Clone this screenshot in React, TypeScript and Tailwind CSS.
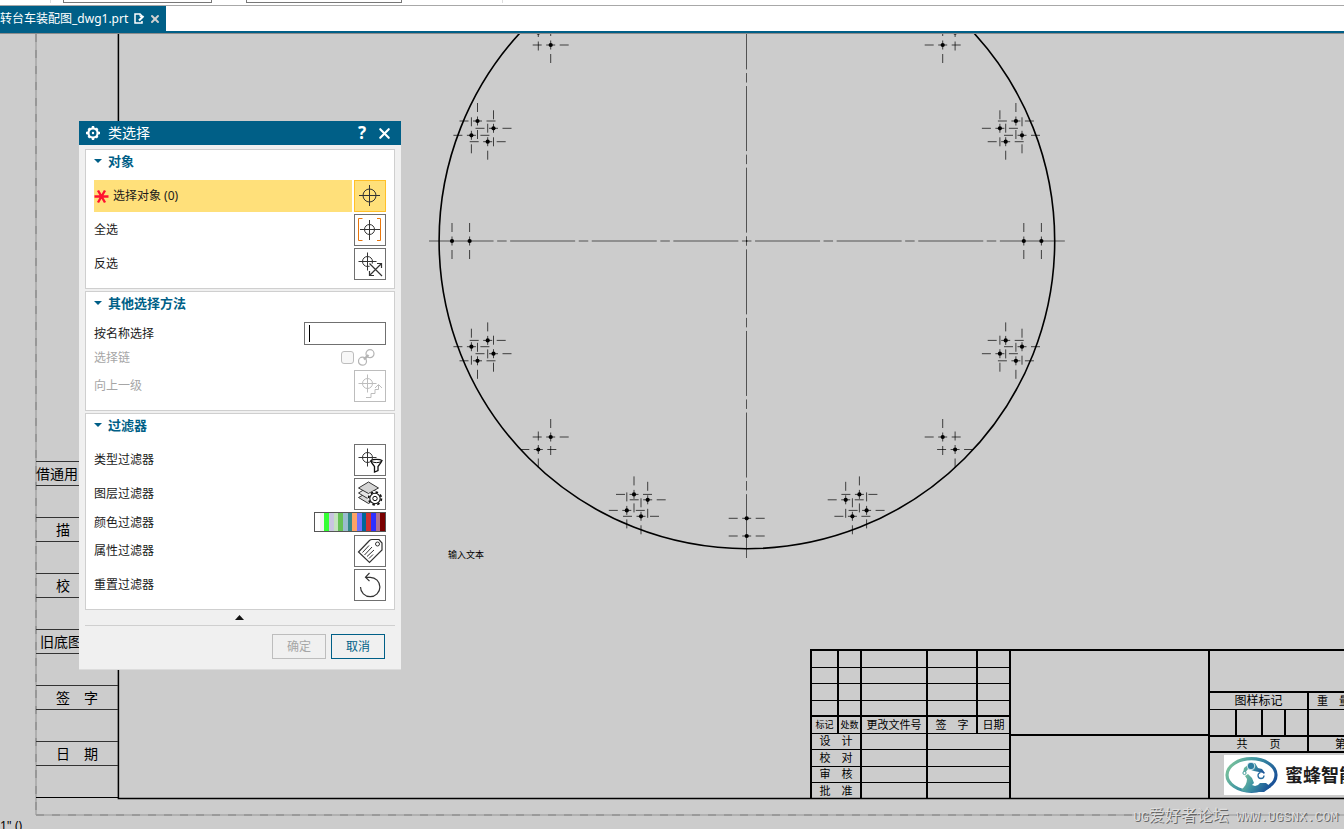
import type { ReactNode } from 'react'
import { X } from 'lucide-react'

const AXIS_X = 746.7
const AXIS_Y = 241

// left half of the hole pattern, mirrored to the right when drawn
const HOLES: [number, number][] = [
  [538.3, 32.5],
  [550.7, 45],
  [477.5, 121],
  [493.5, 128.3],
  [471.4, 135.3],
  [487.7, 141.7],
  [452, 241],
  [469.6, 241],
  [487.7, 340.4],
  [471.4, 346.7],
  [493.5, 353.7],
  [477.5, 360.8],
  [550.7, 437],
  [538.3, 449.5],
  [634, 494.4],
  [647.7, 499.8],
  [626.8, 510.4],
  [641, 516.3],
]

const COLORS = [
  '#ffffff',
  '#f2f2f2',
  '#33ff33',
  '#c9c4e1',
  '#c3e3bf',
  '#66c055',
  '#9abccf',
  '#338888',
  '#ffa366',
  '#7070ff',
  '#006699',
  '#d03030',
  '#2f2fff',
  '#b07090',
  '#7a0000',
]

function Hole({ x, y }: { x: number; y: number }) {
  // holes on an axis share its centre line
  const across = y === AXIS_Y ? '' : `M${x - 18} ${y}h9m4.5 0h9m4.5 0h9`
  const down = x === AXIS_X ? '' : `M${x} ${y - 18}v9m0 4.5v9m0 4.5v9`
  return (
    <g>
      <path d={across + down} stroke="#000" strokeWidth="0.7" />
      <circle cx={x} cy={y} r="2.1" fill="#000" />
    </g>
  )
}

function Drawing() {
  return (
    <svg className="absolute inset-0 size-full" fill="none" aria-hidden="true">
      <g transform="translate(0 -34)">
        {/* sheet edge and frame */}
        <path d="M36 34V815" stroke="#a8a8a8" strokeWidth="1.6" />
        <path d="M36 34V815" stroke="#929292" strokeWidth="1.6" strokeDasharray="8 8" />
        <path d="M36 815H3000" stroke="#a8a8a8" strokeWidth="1.6" />
        <path d="M36 815H3000" stroke="#929292" strokeWidth="1.6" strokeDasharray="8 8" />
        <path d="M118.4 34V798.4H3000" stroke="#000" strokeWidth="1.5" />

        <circle cx="746.9" cy="240.9" r="307.8" stroke="#000" strokeWidth="1.6" />

        {/* centre lines */}
        <g stroke="#000" strokeWidth="0.6" strokeDasharray="9.5 3.6 65 3.5" strokeDashoffset="4.75">
          <path d="M746.7 241H1065" />
          <path d="M746.7 241H429" />
          <path d="M746.5 241V-77" />
          <path d="M746.5 241V558" />
        </g>

        {HOLES.map(([x, y]) => (
          <g key={`${x}-${y}`}>
            <Hole x={x} y={y} />
            <Hole x={AXIS_X * 2 - x} y={y} />
          </g>
        ))}
        {/* side holes keep their cross-ticks, bottom ones sit on the vertical axis */}
        <Hole x={AXIS_X} y={518.3} />
        <Hole x={AXIS_X} y={536} />
        <circle cx={AXIS_X} cy={AXIS_Y} r="0.8" fill="#000" />
      </g>
    </svg>
  )
}

const MARGIN_LABELS = [
  { text: '借通用', pad: 'pl-0' },
  { text: '描', pad: 'pl-5' },
  { text: '校', pad: 'pl-5' },
  { text: '旧底图', pad: 'pl-1' },
  { text: '签　字', pad: 'pl-5' },
  { text: '日　期', pad: 'pl-5' },
]

function MarginStrip() {
  return (
    <div className="absolute left-9 top-[427px] w-[82px] border-b border-black text-[14px]">
      {MARGIN_LABELS.map(({ text, pad }) => (
        <div key={text} className="h-14">
          <div className={`flex h-[25px] items-center whitespace-pre border-y border-[#333] ${pad}`}>{text}</div>
        </div>
      ))}
    </div>
  )
}

const ROLES = ['设　计', '校　对', '审　核', '批　准']

function TitleBlock() {
  return (
    <div className="absolute left-[810px] right-0 top-[615px] flex h-[150px] items-start overflow-hidden text-[11px] leading-[10px]">
      <table className="w-[200px] shrink-0 table-fixed border-collapse border-x-2 border-t-2 border-black text-center [&_td]:border-x-2 [&_td]:border-y [&_td]:border-black [&_td]:p-0 [&_th]:border-x-2 [&_th]:border-t-2 [&_th]:border-b [&_th]:border-black [&_th]:p-0 [&_th]:font-normal">
        <colgroup>
          <col className="w-[27px]" />
          <col className="w-[23px]" />
          <col className="w-[66px]" />
          <col className="w-[50px]" />
          <col className="w-[33px]" />
        </colgroup>
        <tbody>
          {[0, 1, 2, 3].map((row) => (
            <tr key={row} className="h-[17px] even:h-4">
              <td />
              <td />
              <td />
              <td />
              <td />
            </tr>
          ))}
          <tr className="h-[17px]">
            <th className="text-[9px]">标记</th>
            <th className="text-[9px]">处数</th>
            <th>更改文件号</th>
            <th>签　字</th>
            <th>日期</th>
          </tr>
          {ROLES.map((role) => (
            <tr key={role} className="h-[17px] even:h-4">
              <td colSpan={2}>{role}</td>
              <td />
              <td colSpan={2} />
            </tr>
          ))}
        </tbody>
      </table>

      <div className="w-[197px] shrink-0 border-t-2 border-black">
        <div className="h-[85px] border-b-2 border-black" />
      </div>

      <div className="flex h-[150px] min-w-0 flex-1 flex-col border-l-2 border-t-2 border-black">
        <div className="h-[42px] shrink-0 border-b-2 border-black" />
        <div className="flex h-[60px] shrink-0 border-b-2 border-black">
          <div className="w-[99px] shrink-0 border-r-2 border-black text-center text-[12px]">
            <div className="h-[17px] border-b border-black leading-4">图样标记</div>
            <div className="flex h-[27px] border-b-2 border-black">
              <div className="w-[27px] border-r-2 border-black" />
              <div className="w-[26px] border-r-2 border-black" />
              <div className="w-[23px] border-r-2 border-black" />
            </div>
            <div className="whitespace-pre text-[11px] leading-[14px]">共　　页</div>
          </div>
          <div className="min-w-0 flex-1 whitespace-pre text-[11px]">
            <div className="h-[17px] border-b border-black pl-2 leading-4">重　量</div>
            <div className="h-[27px] border-b-2 border-black" />
            <div className="pl-[26px] leading-[14px]">第</div>
          </div>
        </div>
        <div className="ml-[14px] mt-0.5 flex h-10 shrink-0 items-center gap-[7px] whitespace-nowrap bg-white">
          <svg className="ml-px h-[38px] w-[53px] shrink-0" viewBox="0 0 53 38">
            <defs>
              <linearGradient id="logo" x1="0" x2="1" y1="0.2" y2="0.6">
                <stop offset="0" stopColor="#7cc49a" />
                <stop offset="0.45" stopColor="#3f95a3" />
                <stop offset="1" stopColor="#1a5298" />
              </linearGradient>
            </defs>
            <ellipse cx="26.5" cy="19" rx="24.5" ry="16.3" fill="none" stroke="url(#logo)" strokeWidth="3.2" />
            <path d="M16 34c4-3 6-7 6-11l-2-3 3-2 4 4 2 5-2 2 3 1 3-1 2-2h6l5 4-7 5H20z" fill="url(#logo)" />
            <path d="M18 17l1-5 5-4 6-1 3 5 4 1 3 4-3 2-3-3-5-1-6-2-3 4z" fill="url(#logo)" />
            <circle cx="26" cy="10" r="3.8" fill="#2d7d9f" stroke="#fff" strokeWidth="0.8" />
            <circle cx="19.500" cy="17" r="1.600" fill="#fff" stroke="#4da39e" />
            <circle cx="36" cy="19.500" r="3" fill="#fff" stroke="#2b6da0" strokeWidth="1.300" strokeDasharray="13 6" />
          </svg>
          <span className="text-[18px] font-bold text-[#1c1c1c]">蜜蜂智能</span>
        </div>
      </div>
    </div>
  )
}

const TARGET = 'M12.500 3.500v18M3.500 12.500h18M7.500 12.500a5 5 0 1 0 10 0a5 5 0 1 0-10 0'

function Icon({ children }: { children: ReactNode }) {
  return (
    <svg className="size-[30px]" viewBox="0 0 30 30" fill="none" stroke="currentColor" strokeWidth="1">
      {children}
    </svg>
  )
}

function Gear({ className }: { className?: string }) {
  return (
    <svg className={className} viewBox="0 0 16 16" fill="none" stroke="currentColor">
      <circle cx="8" cy="8" r="4.600" strokeWidth="2.200" />
      <path
        d="M8 1v2.500M8 12.500V15M1 8h2.500M12.500 8H15M3.400 3.400l1.400 1.400M11.200 11.200l1.400 1.400M3.400 12.600l1.400-1.400M11.200 4.800l1.400-1.400"
        strokeWidth="2.400"
      />
      <circle cx="8" cy="8" r="1.200" fill="currentColor" stroke="none" />
    </svg>
  )
}

type RowProps = {
  label: string
  icon: ReactNode
  disabled?: boolean
}

function ActionRow({ label, icon, disabled }: RowProps) {
  return (
    <div className="flex h-8 items-center justify-between">
      <span className={disabled ? 'text-[#a6a6a6]' : ''}>{label}</span>
      <button
        type="button"
        aria-label={label}
        disabled={disabled}
        className="size-8 border border-[#707070] bg-white text-[#333] disabled:border-[#bdbdbd] disabled:text-[#bdbdbd]"
      >
        {icon}
      </button>
    </div>
  )
}

function Section({ title, children }: { title: string; children: ReactNode }) {
  return (
    <section className="border border-[#cfcfcf] bg-white px-2 pb-2">
      <h3 className="mb-2 flex h-[22px] items-center gap-1.5 text-[13px] font-bold text-[#005f87]">
        <svg className="h-1 w-2" viewBox="0 0 8 4" fill="currentColor">
          <path d="M0 0h8L4 4z" />
        </svg>
        {title}
      </h3>
      {children}
    </section>
  )
}

function ClassSelectionDialog() {
  return (
    <div
      role="dialog"
      aria-label="类选择"
      className="absolute left-[79px] top-[87px] w-[322px] border-b border-[#dcdcdc] bg-[#f0f0f0] text-[12px] leading-4 text-[#1a1a1a]"
    >
      <div className="flex h-6 items-center bg-[#005f87] pl-1.5 pr-2 text-white">
        <Gear className="size-4" />
        <h2 className="ml-[7px] flex-1 text-[14px]">类选择</h2>
        <button type="button" aria-label="帮助" className="w-4 text-[17px] font-bold">
          ?
        </button>
        <button type="button" aria-label="关闭" className="ml-1.5">
          <X className="size-[17px]" strokeWidth={3} />
        </button>
      </div>

      <div className="flex flex-col gap-0.5 px-1.5 pt-1">
        <Section title="对象">
          <div className="flex flex-col gap-0.5">
            <div className="flex h-8 gap-0.5">
              <div className="flex flex-1 items-center gap-1 bg-[#ffe07a]">
                <svg className="size-[15px]" viewBox="0 0 15 15" stroke="#ff1230" strokeWidth="2.400">
                  <path d="M0.500 7.500h14M4 1.500l7 12M11 1.500l-7 12" />
                </svg>
                选择对象 (0)
              </div>
              <button
                type="button"
                aria-label="选择对象"
                className="size-8 border border-[#ffc028] bg-[#ffe07a] text-[#333]"
              >
                <Icon>
                  <path d="M14.500 4v21M4 14.500h21" />
                  <circle cx="14.500" cy="14.500" r="6.500" />
                </Icon>
              </button>
            </div>
            <ActionRow
              label="全选"
              icon={
                <Icon>
                  <path d="M14.500 5v20M5 14.500h20" />
                  <circle cx="14.500" cy="14.500" r="5" />
                  <path d="M7.500 3.500h-4v22h4M22 3.500h3.500v22H22" stroke="#e8760c" />
                </Icon>
              }
            />
            <ActionRow
              label="反选"
              icon={
                <Icon>
                  <path d={TARGET} />
                  <path d="M14.500 26.500l12-12M15 15l12 12" stroke="#fff" strokeWidth="3" />
                  <path
                    d="M14.500 26.500l12-12M14.500 14.500l12.500 12.500M22 14.500h4.500V19M14.500 22v4.500H19"
                    strokeWidth="1.200"
                  />
                </Icon>
              }
            />
          </div>
        </Section>

        <Section title="其他选择方法">
          <div className="relative flex h-[23px] items-center justify-between">
            <label htmlFor="by-name">按名称选择</label>
            <input
              id="by-name"
              type="text"
              className="h-[23px] w-[82px] border border-[#707070] bg-white px-1 caret-transparent outline-none"
            />
            <span className="absolute right-[76px] top-[3px] h-[17px] w-px bg-black" />
          </div>
          <div className="flex h-[25px] items-center text-[#a6a6a6]">
            <label htmlFor="chain" className="flex-1">
              选择链
            </label>
            <input
              id="chain"
              type="checkbox"
              disabled
              className="size-[13px] appearance-none rounded-[3px] border border-[#bdbdbd] bg-[#f7f7f7]"
            />
            <svg
              className="ml-1 mr-[11px] size-[17px]"
              viewBox="0 0 17 17"
              fill="none"
              stroke="#b4b4b4"
              strokeWidth="1.200"
            >
              <circle cx="4.500" cy="12.200" r="4" />
              <circle cx="12" cy="4.700" r="4" />
              <path d="M6 10.500l4.500-4.500" strokeWidth="2.400" />
            </svg>
          </div>
          <ActionRow
            label="向上一级"
            disabled
            icon={
              <Icon>
                <path d={TARGET} />
                <path d="M11 26.500h5v-4h4v-4h3.500v-4" stroke="#fff" strokeWidth="3" />
                <path d="M11 26.500h5v-4h4v-4h3.500v-4.500M20 17l3.500-3.500L27 17" />
              </Icon>
            }
          />
        </Section>

        <Section title="过滤器">
          <div className="flex flex-col gap-0.5">
            <ActionRow
              label="类型过滤器"
              icon={
                <Icon>
                  <path d={TARGET} />
                  <path
                    d="M16 15.500c2-1.500 9-1.500 11 0l-1 2-3 4v4l-3.500 1.500v-5.500l-3-4z"
                    fill="#fff"
                    stroke="#111"
                    strokeWidth="1.300"
                  />
                  <path d="M16.500 16.500c3 1.500 7 1.500 10 0" stroke="#111" />
                </Icon>
              }
            />
            <ActionRow
              label="图层过滤器"
              icon={
                <Icon>
                  <path d="M3.500 18.500l10-5.500 10 5.500-10 6z" fill="#d8d8d8" />
                  <path d="M3.500 14l10-6 10 6-10 6z" fill="#e4e4e4" />
                  <path d="M3.500 9l10-6 10 6-10 5.500z" fill="#d5d5d5" />
                  <circle cx="20" cy="19.500" r="7" fill="#fff" stroke="#fff" />
                  <circle cx="20" cy="19.500" r="6.400" stroke="#111" strokeWidth="1.700" strokeDasharray="2.500 2.500" />
                  <circle cx="20" cy="19.500" r="5.200" fill="#fff" stroke="#111" strokeWidth="1.100" />
                  <circle cx="20" cy="19.500" r="2.200" stroke="#111" />
                </Icon>
              }
            />
            <div className="flex h-[21px] items-start justify-between">
              <span className="leading-[21px]">颜色过滤器</span>
              <button type="button" aria-label="颜色过滤器" className="flex h-5 w-[72px] border border-[#555]">
                {COLORS.map((color) => (
                  <span key={color} className="h-full flex-1" style={{ backgroundColor: color }} />
                ))}
              </button>
            </div>
            <ActionRow
              label="属性过滤器"
              icon={
                <Icon>
                  <path d="M3.500 16L14.500 4.500q1-1 2.500-1h7l3 3.500v7L14.500 26.500z" strokeWidth="1.200" />
                  <circle cx="22.500" cy="8" r="2" />
                  <path d="M7.500 16.500l6.500-7M9.500 19l7.500-8M12 20.500l7-6.500M14 22.500l4-4" />
                </Icon>
              }
            />
            <ActionRow
              label="重置过滤器"
              icon={
                <Icon>
                  <path d="M5.500 17a9.700 9.700 0 1 0 9.700-9.700H10.500M14.500 3l-4 4.200 4 4" strokeWidth="1.200" />
                </Icon>
              }
            />
          </div>
        </Section>
      </div>

      <div className="mx-1.5 flex h-4 items-center justify-center border-b border-[#cfcfcf] pr-px">
        <button type="button" aria-label="折叠">
          <svg className="h-[5px] w-[9px]" viewBox="0 0 9 5" fill="#111">
            <path d="M4.500 0L9 5H0z" />
          </svg>
        </button>
      </div>
      <div className="flex justify-end gap-[5px] pb-2.5 pr-4 pt-2">
        <button type="button" disabled className="h-[25px] w-[54px] border border-[#bdbdbd] text-[#a6a6a6]">
          确定
        </button>
        <button type="button" className="h-[25px] w-[54px] border border-[#005f87] text-[#005f87]">
          取消
        </button>
      </div>
    </div>
  )
}

export default function App() {
  return (
    <div className="flex h-screen flex-col overflow-hidden bg-white font-['Noto_Sans','Noto_Sans_CJK_SC',sans-serif] text-black">
      <header className="flex h-1.5 shrink-0 items-end overflow-hidden border-b border-[#a8a8a8] pb-0.5 pl-[50px]">
        <span className="h-4 w-px bg-[#ddd]" />
        <input aria-label="类型" className="ml-3 h-5 w-[149px] border border-[#777]" />
        <input aria-label="范围" className="ml-[34px] h-5 w-[156px] border border-[#777]" />
        <span className="ml-[100px] h-4 w-px bg-[#ddd]" />
      </header>

      <nav className="flex h-[27px] shrink-0 border-b-2 border-[#005f87]">
        <div className="flex h-[25px] items-center bg-[#005f87] pr-[5px] text-[12px] text-white">
          <span>转台车装配图_dwg1.prt</span>
          <svg className="ml-1.5 size-[11px]" viewBox="0 0 11 11" fill="none" stroke="#fff" strokeWidth="1.500">
            <path d="M8 8v2H1V1h5l2 2" />
            <path d="M5 7.500l4.500-4.500" strokeWidth="2.200" />
            <path d="M6 1v2.500h2" strokeWidth="1" />
          </svg>
          <button type="button" aria-label="关闭标签" className="ml-1 text-[#d0d0d0]">
            <X className="size-3" strokeWidth={4} />
          </button>
        </div>
      </nav>

      <main className="relative flex-1 overflow-hidden border-t border-[#8c8c8c] bg-[#ccc]">
        <Drawing />
        <MarginStrip />
        <TitleBlock />
        <p className="absolute left-[448px] top-[514px] text-[9px] leading-[14px]">输入文本</p>
        <p className="absolute left-0 top-[784px] text-[12px] leading-4">1" ()</p>
        <ClassSelectionDialog />
        <p className="absolute bottom-px right-1.5 whitespace-pre font-['Liberation_Mono','Noto_Sans_CJK_SC',monospace] text-[13px] leading-5 text-[#ddd] [text-shadow:1px_1px_0_#666]">
          UG<span className="text-[16px]">爱好者论坛</span> WWW.UGSNX.COM
        </p>
      </main>
    </div>
  )
}
